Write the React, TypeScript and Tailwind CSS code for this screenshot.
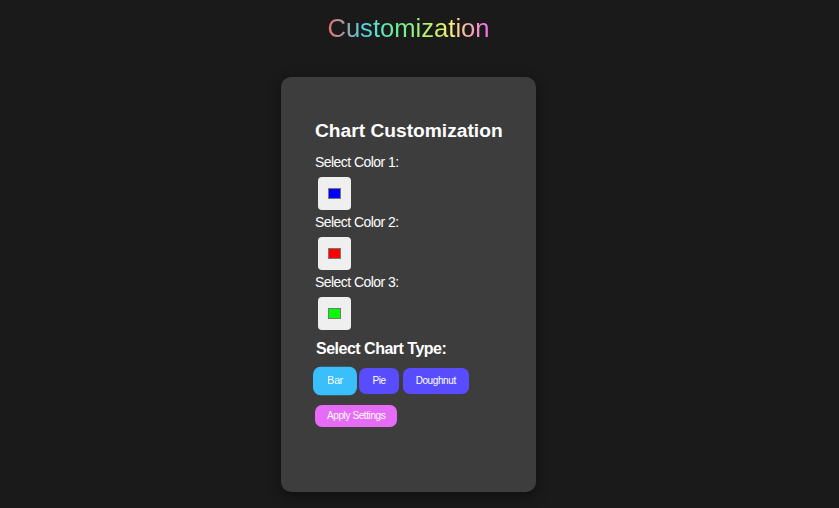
import React, { useState } from 'react';

type ChartType = 'bar' | 'pie' | 'doughnut';

const ColorPicker: React.FC<{ label: string; color: string }> = ({ label, color }) => (
    <div className="flex flex-col items-start">
        <label className="text-[14px] leading-[16px] tracking-[-0.55px] text-white mb-[7px]">{label}</label>
        <div className="ml-[3px] mb-[4px] w-[33px] h-[33px] bg-[#efefef] rounded-[4px] flex items-center justify-center">
            <span className="block w-[13px] h-[11px] border border-[#777777]" style={{ backgroundColor: color }} />
        </div>
    </div>
);

const App: React.FC = () => {
    const [chartType, setChartType] = useState<ChartType>('bar');
    const types: { key: ChartType; label: string }[] = [
        { key: 'bar', label: 'Bar' },
        { key: 'pie', label: 'Pie' },
        { key: 'doughnut', label: 'Doughnut' },
    ];

    return (
        <div className="min-h-screen bg-[#1a1a1a] font-['Liberation_Sans',Arial,sans-serif] flex flex-col items-center pr-[22px]">
            <h1 className="pt-[13px] text-[25.6px] leading-[30px] bg-[linear-gradient(90deg,#f26a6a_0%,#52d4e6_22%,#6ef08e_45%,#c6f064_66%,#f6ee7c_76%,#f8a8b0_88%,#f46cf2_100%)] bg-clip-text text-transparent">
                Customization
            </h1>
            <div className="mt-[34px] w-[255px] h-[415px] bg-[#3d3d3d] rounded-[10px] shadow-[0_4px_14px_rgba(0,0,0,0.45)] pt-[43px] pl-[34px] pr-[20px]">
                <h2 className="text-[19.2px] leading-[22px] font-bold text-white mb-[12px]">Chart Customization</h2>
                <ColorPicker label="Select Color 1:" color="#0000ff" />
                <ColorPicker label="Select Color 2:" color="#ff0000" />
                <ColorPicker label="Select Color 3:" color="#00ff00" />
                <h3 className="mt-[6px] pl-[1px] text-[16px] leading-[18px] font-bold tracking-[-0.5px] text-white">Select Chart Type:</h3>
                <div className="mt-[10px] flex gap-[4px]">
                    {types.map((t) => (
                        <button
                            key={t.key}
                            onClick={() => setChartType(t.key)}
                            className={
                                chartType === t.key
                                    ? 'bg-[#3bbffb] scale-110 text-white text-[10px] leading-[12px] tracking-[-0.4px] px-[13px] py-[7px] rounded-[7px]'
                                    : 'bg-[#594cff] text-white text-[10px] leading-[12px] tracking-[-0.4px] px-[13px] py-[7px] rounded-[7px]'
                            }
                        >
                            {t.label}
                        </button>
                    ))}
                </div>
                <button className="mt-[11px] bg-[#e66cf7] text-white text-[10px] leading-[12px] tracking-[-0.4px] px-[12px] py-[5px] rounded-[7px]">
                    Apply Settings
                </button>
            </div>
        </div>
    );
};

export default App;
